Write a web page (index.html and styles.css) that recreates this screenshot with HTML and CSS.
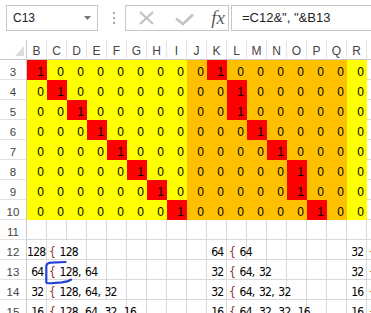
FILE: index.html
```html
<!DOCTYPE html>
<html>
<head>
<meta charset="utf-8">
<link rel="stylesheet" href="styles.css">
</head>
<body>
<div class="app">
  <div class="toolbar">
    <div class="namebox">
      <span class="nb-text">C13</span>
      <svg class="nb-arrow" width="7" height="4" viewBox="0 0 7 4"><path d="M0 0H7L3.5 4Z" fill="#777"/></svg>
    </div>
    <div class="grip"><i></i><i></i><i></i></div>
    <div class="btns">
      <svg class="ic-x" width="15" height="14" viewBox="0 0 15 14"><path d="M1 1L14 13M14 1L1 13" stroke="#c2c2c2" stroke-width="2.2" fill="none"/></svg>
      <svg class="ic-ok" width="19" height="13" viewBox="0 0 19 13"><path d="M1 5.5L8 11L18 1.5" stroke="#c2c2c2" stroke-width="2.6" fill="none"/></svg>
      <span class="fx">fx</span>
    </div>
    <div class="formula">=C12&amp;", "&amp;B13</div>
  </div>

  <div class="sheet">
    <div class="row hdr">
      <span class="corner"><svg width="9" height="10" viewBox="0 0 9 10"><path d="M9 0V10H0Z" fill="#dcdcdc"/></svg></span>
      <span>B</span><span>C</span><span>D</span><span>E</span><span>F</span><span>G</span><span>H</span><span>I</span><span>J</span><span>K</span><span>L</span><span>M</span><span>N</span><span>O</span><span>P</span><span>Q</span><span>R</span><span></span>
    </div>

    <div class="row"><span class="rh">3</span>
      <span class="x">1</span><span class="y">0</span><span class="y">0</span><span class="y">0</span><span class="y">0</span><span class="y">0</span><span class="y">0</span><span class="y">0</span>
      <span class="o">0</span><span class="x">1</span><span class="o">0</span><span class="o">0</span><span class="o">0</span><span class="o">0</span><span class="o">0</span><span class="o">0</span>
      <span class="y">0</span><span></span>
    </div>
    <div class="row"><span class="rh">4</span>
      <span class="y">0</span><span class="x">1</span><span class="y">0</span><span class="y">0</span><span class="y">0</span><span class="y">0</span><span class="y">0</span><span class="y">0</span>
      <span class="o">0</span><span class="o">0</span><span class="x">1</span><span class="o">0</span><span class="o">0</span><span class="o">0</span><span class="o">0</span><span class="o">0</span>
      <span class="y">0</span><span></span>
    </div>
    <div class="row"><span class="rh">5</span>
      <span class="y">0</span><span class="y">0</span><span class="x">1</span><span class="y">0</span><span class="y">0</span><span class="y">0</span><span class="y">0</span><span class="y">0</span>
      <span class="o">0</span><span class="o">0</span><span class="x">1</span><span class="o">0</span><span class="o">0</span><span class="o">0</span><span class="o">0</span><span class="o">0</span>
      <span class="y">0</span><span></span>
    </div>
    <div class="row"><span class="rh">6</span>
      <span class="y">0</span><span class="y">0</span><span class="y">0</span><span class="x">1</span><span class="y">0</span><span class="y">0</span><span class="y">0</span><span class="y">0</span>
      <span class="o">0</span><span class="o">0</span><span class="o">0</span><span class="x">1</span><span class="o">0</span><span class="o">0</span><span class="o">0</span><span class="o">0</span>
      <span class="y">0</span><span></span>
    </div>
    <div class="row"><span class="rh">7</span>
      <span class="y">0</span><span class="y">0</span><span class="y">0</span><span class="y">0</span><span class="x">1</span><span class="y">0</span><span class="y">0</span><span class="y">0</span>
      <span class="o">0</span><span class="o">0</span><span class="o">0</span><span class="o">0</span><span class="x">1</span><span class="o">0</span><span class="o">0</span><span class="o">0</span>
      <span class="y">0</span><span></span>
    </div>
    <div class="row"><span class="rh">8</span>
      <span class="y">0</span><span class="y">0</span><span class="y">0</span><span class="y">0</span><span class="y">0</span><span class="x">1</span><span class="y">0</span><span class="y">0</span>
      <span class="o">0</span><span class="o">0</span><span class="o">0</span><span class="o">0</span><span class="o">0</span><span class="x">1</span><span class="o">0</span><span class="o">0</span>
      <span class="y">0</span><span></span>
    </div>
    <div class="row"><span class="rh">9</span>
      <span class="y">0</span><span class="y">0</span><span class="y">0</span><span class="y">0</span><span class="y">0</span><span class="y">0</span><span class="x">1</span><span class="y">0</span>
      <span class="o">0</span><span class="o">0</span><span class="o">0</span><span class="o">0</span><span class="o">0</span><span class="x">1</span><span class="o">0</span><span class="o">0</span>
      <span class="y">0</span><span></span>
    </div>
    <div class="row"><span class="rh">10</span>
      <span class="y">0</span><span class="y">0</span><span class="y">0</span><span class="y">0</span><span class="y">0</span><span class="y">0</span><span class="y">0</span><span class="x">1</span>
      <span class="o">0</span><span class="o">0</span><span class="o">0</span><span class="o">0</span><span class="o">0</span><span class="o">0</span><span class="x">1</span><span class="o">0</span>
      <span class="y">0</span><span></span>
    </div>

    <div class="row"><span class="rh">11</span>
      <span></span><span></span><span></span><span></span><span></span><span></span><span></span><span></span><span></span><span></span><span></span><span></span><span></span><span></span><span></span><span></span><span></span><span></span>
    </div>
    <div class="row"><span class="rh">12</span>
      <span class="n">128</span><span class="t s2"><em>{</em> 128</span>
      <span></span><span></span><span></span><span></span><span></span><span></span>
      <span class="n">64</span><span class="t"><em>{</em> 64</span>
      <span></span><span></span><span></span><span></span><span></span>
      <span class="n">32</span><span class="t"><em>{</em></span>
    </div>
    <div class="row"><span class="rh">13</span>
      <span class="n">64</span><span class="t s2"><em>{</em> 128, 64</span>
      <span></span><span></span><span></span><span></span><span></span><span></span>
      <span class="n">32</span><span class="t s2"><em>{</em> 64, 32</span>
      <span></span><span></span><span></span><span></span>
      <span class="n">32</span><span class="t"><em>{</em></span>
    </div>
    <div class="row"><span class="rh">14</span>
      <span class="n">32</span><span class="t s3"><em>{</em> 128, 64, 32</span>
      <span></span><span></span><span></span><span></span><span></span>
      <span class="n">32</span><span class="t s3"><em>{</em> 64, 32, 32</span>
      <span></span><span></span><span></span>
      <span class="n">16</span><span class="t"><em>{</em></span>
    </div>
    <div class="row"><span class="rh">15</span>
      <span class="n">16</span><span class="t s4"><em>{</em> 128, 64, 32, 16</span>
      <span></span><span></span><span></span><span></span>
      <span class="n">16</span><span class="t s4"><em>{</em> 64, 32, 32, 16</span>
      <span></span><span></span>
      <span class="n">16</span><span class="t"><em>{</em></span>
    </div>
  </div>

  <svg class="mark" width="371" height="313" viewBox="0 0 371 313">
    <path d="M65.5 262L51 262.7Q46.5 263 46.3 266.5L46.3 282.5Q47 283.6 53 283.1L62 282.4Q68 281.6 71 279.7" stroke="#2343d6" stroke-width="2.2" fill="none" stroke-linecap="round"/>
  </svg>
</div>
</body>
</html>
```

FILE: styles.css
```css
html, body {
  margin: 0;
  padding: 0;
  background: #fff;
}

.app {
  position: relative;
  width: 371px;
  height: 313px;
  overflow: hidden;
  background: #fff;
  font-family: "Liberation Sans", Arial, sans-serif;
}

/* ---------- formula bar ---------- */
.toolbar {
  height: 40px;
  display: flex;
  align-items: flex-start;
  padding-top: 5px;
  box-sizing: border-box;
  white-space: nowrap;
}

.namebox {
  margin-left: 6px;
  width: 101px;
  height: 26px;
  box-sizing: border-box;
  border: 1px solid #c6c6c6;
  display: flex;
  align-items: center;
  padding-left: 6px;
  padding-right: 6px;
}

.nb-text {
  flex: 1;
  font-size: 12px;
  line-height: 24px;
  color: #222;
}

.nb-arrow {
  display: block;
}

.grip {
  margin-left: 15px;
  width: 2px;
  height: 26px;
  display: flex;
  flex-direction: column;
  justify-content: center;
  gap: 3px;
}

.grip i {
  display: block;
  width: 2px;
  height: 2px;
  background: #a6a6a6;
}

.btns {
  margin-left: 10px;
  width: 115px;
  height: 26px;
  box-sizing: border-box;
  border: 1px solid #c6c6c6;
  display: flex;
  align-items: center;
  position: relative;
}

.ic-x {
  margin-left: 13px;
  display: block;
}

.ic-ok {
  margin-left: 21px;
  margin-top: 2px;
  display: block;
}

.fx {
  margin-left: 17px;
  font-family: "Liberation Serif", "Times New Roman", serif;
  font-style: italic;
  font-size: 19px;
  line-height: 24px;
  color: #5f5f5f;
  margin-top: -1px;
}

.formula {
  margin-left: 2px;
  width: 140px;
  flex: none;
  height: 26px;
  box-sizing: border-box;
  border: 1px solid #c6c6c6;
  border-right: none;
  padding-left: 10px;
  font-size: 13px;
  line-height: 24px;
  color: #222;
}

/* ---------- grid ---------- */
.sheet {
  display: flex;
  flex-direction: column;
}

.row {
  display: grid;
  grid-template-columns: 27px repeat(18, 20px);
  height: 20px;
}

.row > span {
  box-sizing: border-box;
  height: 20px;
  border-right: 1px solid #d9d9d9;
  border-bottom: 1px solid #d9d9d9;
  font-size: 12px;
  line-height: 14px;
  padding: 5px 2px 0 0;
  text-align: right;
  white-space: nowrap;
  overflow: visible;
  color: #000;
}

.row > span.rh {
  text-align: center;
  padding-right: 0;
  font-size: 11.5px;
  color: #444;
  border-right-color: #c8c8c8;
  border-bottom-color: #e1e1e1;
}

.hdr > span {
  text-align: center;
  padding: 4px 0 0 0;
  color: #444;
  border-right-color: #e3e3e3;
  border-bottom-color: #c8c8c8;
}

.hdr > span.corner {
  border-right-color: #c8c8c8;
  padding: 0;
  position: relative;
}

.corner svg {
  position: absolute;
  right: 2px;
  bottom: 3px;
}

.row > .y {
  background: #ffff00;
  border-color: transparent;
}

.row > .o {
  background: #ffc000;
  border-color: transparent;
}

.row > .x {
  background: #ff0000;
  border-color: transparent;
}

.row > .t {
  text-align: left;
  padding-left: 2px;
  padding-right: 0;
  font-family: "Liberation Sans Narrow", "Arial Narrow", "DejaVu Sans Condensed", sans-serif;
  letter-spacing: -0.7px;
  word-spacing: 1.6px;
}

.row > .n {
  font-family: "Liberation Sans Narrow", "Arial Narrow", "DejaVu Sans Condensed", sans-serif;
  letter-spacing: -0.7px;
  padding-right: 2.5px;
}

.t em {
  font-style: normal;
  color: #8a2b1f;
}

.s2 { grid-column: span 2; }
.s3 { grid-column: span 3; }
.s4 { grid-column: span 4; }

/* ---------- hand-drawn mark ---------- */
.mark {
  position: absolute;
  left: 0;
  top: 0;
  pointer-events: none;
}
```
